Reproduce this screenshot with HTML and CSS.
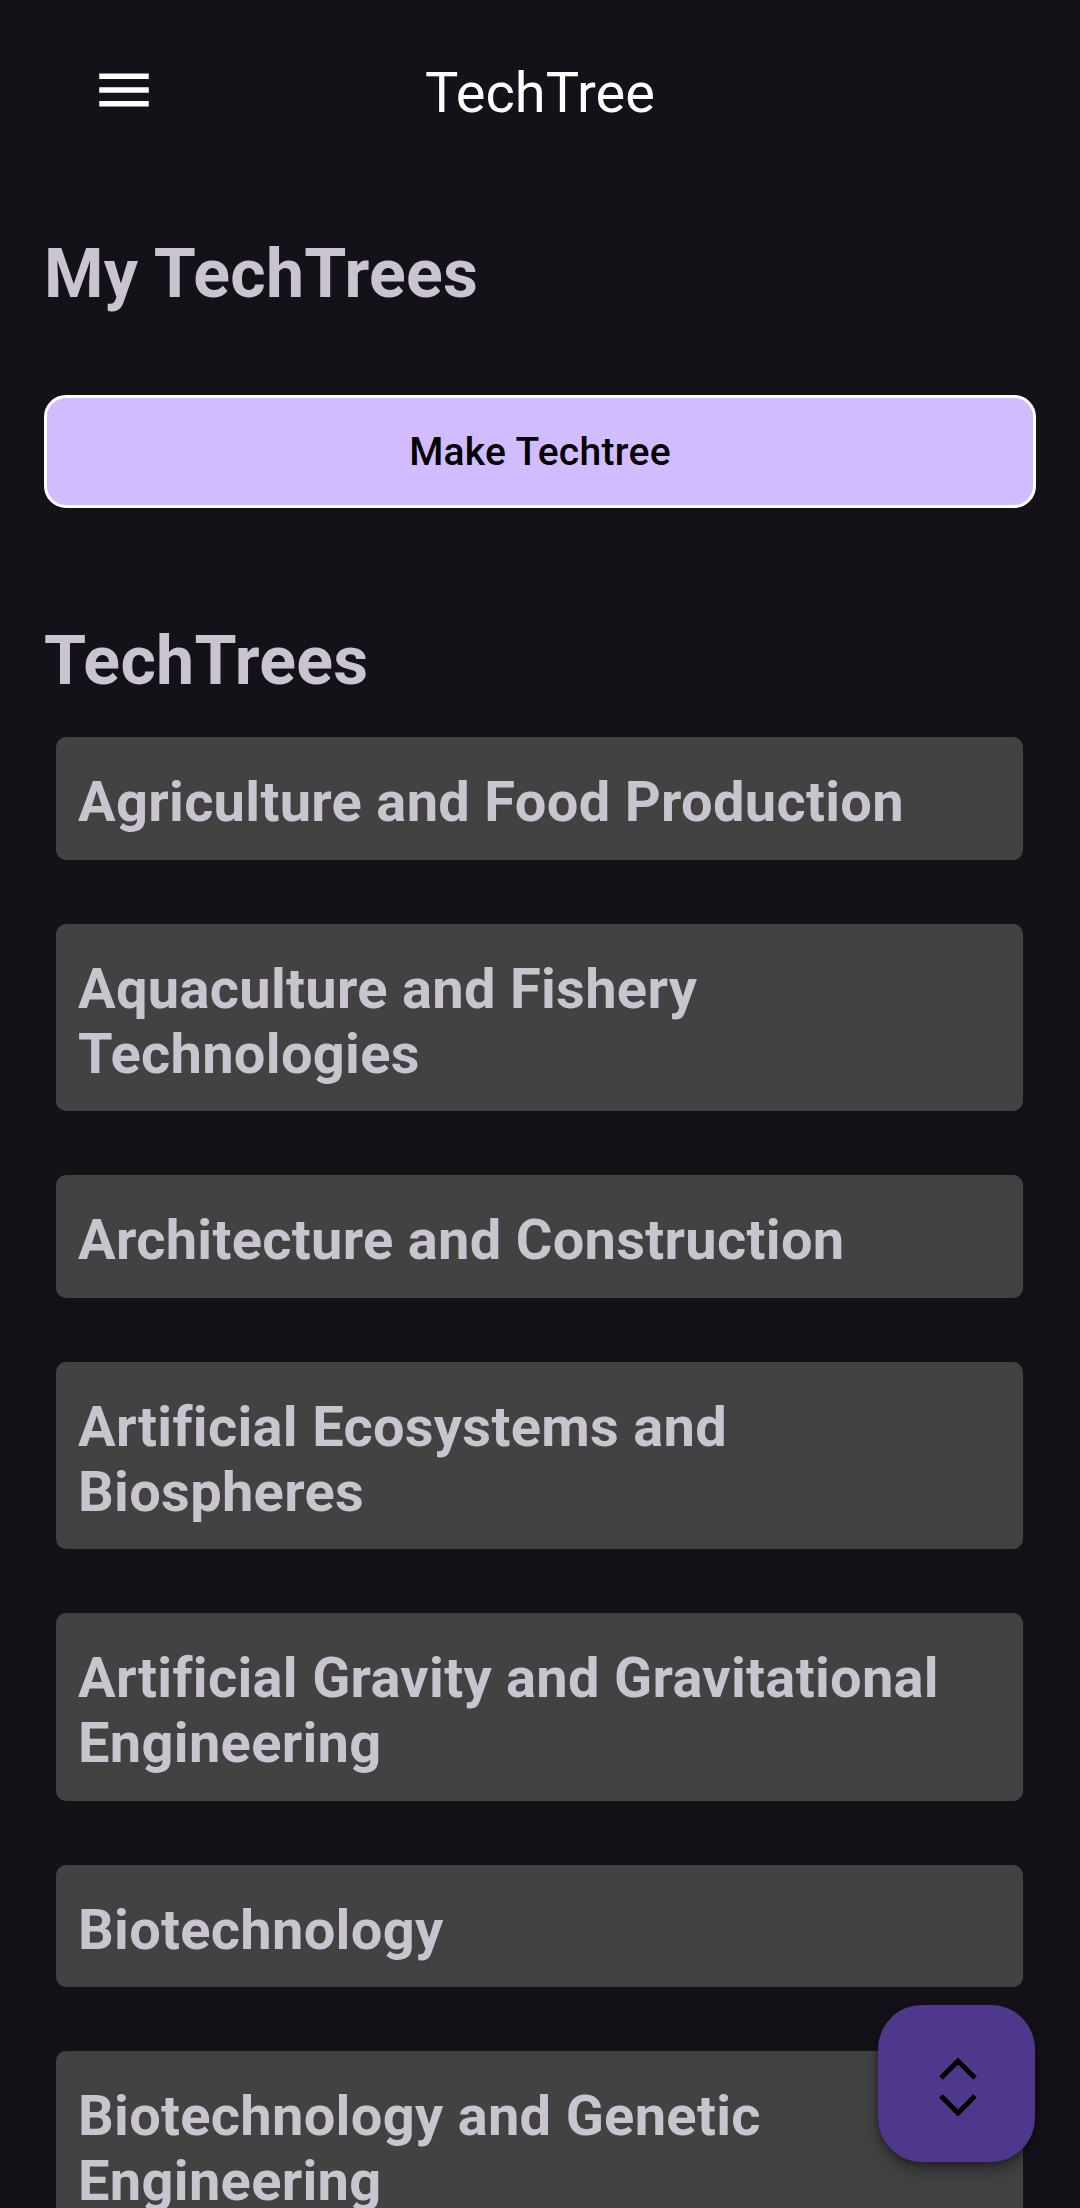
FILE: index.html
```html
<!DOCTYPE html>
<html lang="en">
<head>
<meta charset="utf-8">
<title>TechTree</title>
<link rel="stylesheet" href="styles.css">
</head>
<body>
<header class="appbar">
  <div class="appbar-left">
    <button class="icon-btn" aria-label="Menu">
      <svg width="66" height="66" viewBox="0 0 24 24"><path d="M3 18h18v-2H3v2zm0-5h18v-2H3v2zm0-7v2h18V6H3z" fill="#ffffff"/></svg>
    </button>
  </div>
  <h1 class="appbar-title">TechTree</h1>
  <div class="appbar-right"></div>
</header>
<main class="content">
  <h2 class="section-title">My TechTrees</h2>
  <button class="make-btn">Make Techtree</button>
  <h2 class="section-title section-title--second">TechTrees</h2>
  <ul class="tree-list">
    <li class="tree-card">Agriculture and Food Production</li>
    <li class="tree-card">Aquaculture and Fishery Technologies</li>
    <li class="tree-card">Architecture and Construction</li>
    <li class="tree-card">Artificial Ecosystems and Biospheres</li>
    <li class="tree-card">Artificial Gravity and Gravitational Engineering</li>
    <li class="tree-card">Biotechnology</li>
    <li class="tree-card">Biotechnology and Genetic Engineering</li>
  </ul>
</main>
<button class="fab" aria-label="Reorder">
  <svg width="66" height="66" viewBox="0 0 66 66"><polyline points="17,27 34,10 51,27" fill="none" stroke="#000" stroke-width="5"/><polyline points="17,45 34,62 51,45" fill="none" stroke="#000" stroke-width="5"/></svg>
</button>
</body>
</html>
```
FILE: styles.css
```css
* { box-sizing: border-box; }
html, body {
  margin: 0;
  padding: 0;
  background: #141218;
  height: 2208px;
  overflow: hidden;
}
body {
  font-family: Roboto, "Noto Sans", "Liberation Sans", sans-serif;
  color: #cac4d0;
}
.appbar {
  height: 185px;
  display: grid;
  grid-template-columns: 1fr auto 1fr;
  align-items: center;
}
.appbar-left {
  display: flex;
  align-items: center;
  padding-left: 91px;
  padding-bottom: 5px;
}
.icon-btn {
  width: 66px;
  height: 66px;
  padding: 0;
  border: 0;
  background: transparent;
  display: block;
}
.icon-btn svg { display: block; }
.appbar-title {
  margin: 0;
  font-size: 56px;
  font-weight: 400;
  color: #ffffff;
  line-height: normal;
}
.content {
  padding: 0 44px;
}
.section-title {
  margin: 49px 0 0;
  font-size: 68px;
  font-weight: 700;
  line-height: normal;
  letter-spacing: 0.3px;
  color: #cac4d0;
}
.section-title--second {
  margin-top: 113px;
}
.make-btn {
  display: block;
  width: 100%;
  height: 113px;
  margin-top: 81px;
  background: #d0bcff;
  border: 3px solid #ffffff;
  border-radius: 22px;
  color: #000000;
  font-family: Roboto, "Noto Sans", sans-serif;
  font-size: 39px;
  font-weight: 500;
  letter-spacing: 0.3px;
}
.tree-list {
  list-style: none;
  margin: 36px 0 0;
  padding: 0 13px 0 12px;
  display: flex;
  flex-direction: column;
  gap: 64px;
}
.tree-card {
  background: #424242;
  border-radius: 10px;
  padding: 33px 22px 24.5px;
  font-size: 56px;
  font-weight: 700;
  line-height: 65px;
  letter-spacing: 0.3px;
  color: #cac4d0;
}
.fab {
  position: fixed;
  right: 45px;
  top: 2005px;
  width: 157px;
  height: 157px;
  border: 0;
  border-radius: 44px;
  background: #4f378b;
  display: flex;
  align-items: center;
  justify-content: center;
  padding: 0;
  box-shadow: 0 8px 16px rgba(0,0,0,0.35), 0 2px 6px rgba(0,0,0,0.3);
}
.fab svg { display: block; }
```
